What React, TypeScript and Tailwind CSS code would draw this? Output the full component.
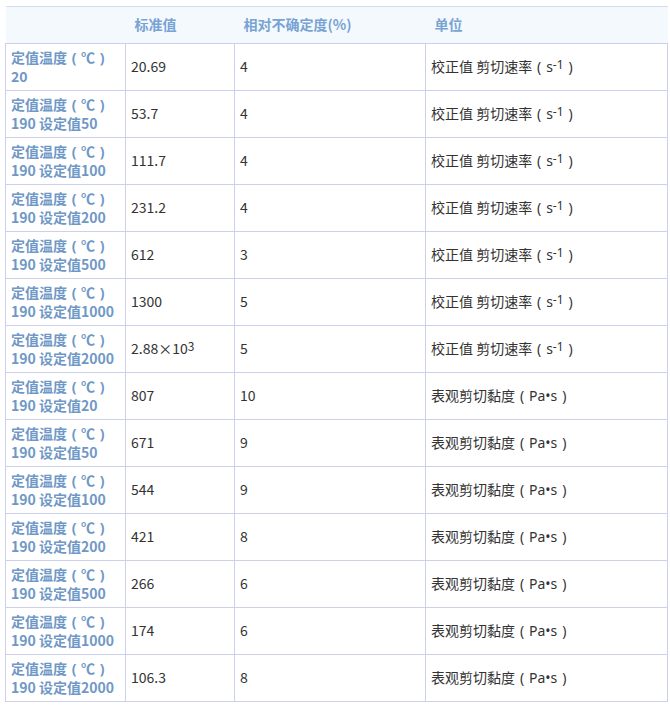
import React from 'react';

type Row = { label: string; value: React.ReactNode; unc: string; unit: 'rate' | 'visc' };

// fullwidth-looking paren with the glyph centred, like the YaHei rendering
const P: React.FC<{ c: string }> = ({ c }) => (
  <span className="inline-block w-[14px] text-center" style={{ fontFamily: '"Noto Sans", sans-serif' }}>
    {c}
  </span>
);

const Sup: React.FC<{ children: React.ReactNode }> = ({ children }) => (
  <sup className="text-[12px] relative -top-[3px]">{children}</sup>
);

const rows: Row[] = [
  { label: '20', value: '20.69', unc: '4', unit: 'rate' },
  { label: '190 设定值50', value: '53.7', unc: '4', unit: 'rate' },
  { label: '190 设定值100', value: '111.7', unc: '4', unit: 'rate' },
  { label: '190 设定值200', value: '231.2', unc: '4', unit: 'rate' },
  { label: '190 设定值500', value: '612', unc: '3', unit: 'rate' },
  { label: '190 设定值1000', value: '1300', unc: '5', unit: 'rate' },
  {
    label: '190 设定值2000',
    value: (
      <>
        2.88×10<Sup>3</Sup>
      </>
    ),
    unc: '5',
    unit: 'rate',
  },
  { label: '190 设定值20', value: '807', unc: '10', unit: 'visc' },
  { label: '190 设定值50', value: '671', unc: '9', unit: 'visc' },
  { label: '190 设定值100', value: '544', unc: '9', unit: 'visc' },
  { label: '190 设定值200', value: '421', unc: '8', unit: 'visc' },
  { label: '190 设定值500', value: '266', unc: '6', unit: 'visc' },
  { label: '190 设定值1000', value: '174', unc: '6', unit: 'visc' },
  { label: '190 设定值2000', value: '106.3', unc: '8', unit: 'visc' },
];

const Unit: React.FC<{ kind: Row['unit'] }> = ({ kind }) =>
  kind === 'rate' ? (
    <>
      校正值 剪切速率<P c="(" />
      <span style={{ fontFamily: '"Noto Sans", sans-serif' }}>
        s<Sup>-1</Sup>
      </span>
      <P c=")" />
    </>
  ) : (
    <>
      表观剪切黏度<P c="(" />
      <span style={{ fontFamily: '"Noto Sans", sans-serif' }}>Pa•s</span>
      <P c=")" />
    </>
  );

const cell = 'border border-[#cdd0ea] px-[5px] pb-[2px] align-middle';

export default function App() {
  return (
    <div
      className="bg-white min-h-[708px] pl-[5px] pt-[6px] text-[14px] text-[#333]"
      style={{ fontFamily: '"Noto Sans CJK SC", "Noto Sans", sans-serif' }}
    >
      <table className="border-collapse table-fixed w-[662px]">
        <colgroup>
          <col className="w-[120px]" />
          <col className="w-[109px]" />
          <col className="w-[191px]" />
          <col className="w-[242px]" />
        </colgroup>
        <thead>
          <tr className="h-[37px] bg-[#f4f9fe] border-t border-b border-[#d6dcea]">
            <th className="px-[9px] pb-[2px] text-left font-bold text-[#78a3d3]"></th>
            <th className="px-[9px] pb-[2px] text-left font-bold text-[#78a3d3]">标准值</th>
            <th className="px-[9px] pb-[2px] text-left font-bold text-[#78a3d3]">相对不确定度(%)</th>
            <th className="px-[9px] pb-[2px] text-left font-bold text-[#78a3d3]">单位</th>
          </tr>
        </thead>
        <tbody>
          {rows.map((r, i) => (
            <tr key={i} className="h-[47px]">
              <td className={`${cell} font-bold text-[#6f98c6] leading-[18px]`}>
                <div>
                  定值温度<P c="(" />℃<P c=")" />
                </div>
                <div>{r.label}</div>
              </td>
              <td className={cell}>{r.value}</td>
              <td className={cell}>{r.unc}</td>
              <td className={cell}>
                <Unit kind={r.unit} />
              </td>
            </tr>
          ))}
        </tbody>
      </table>
    </div>
  );
}
